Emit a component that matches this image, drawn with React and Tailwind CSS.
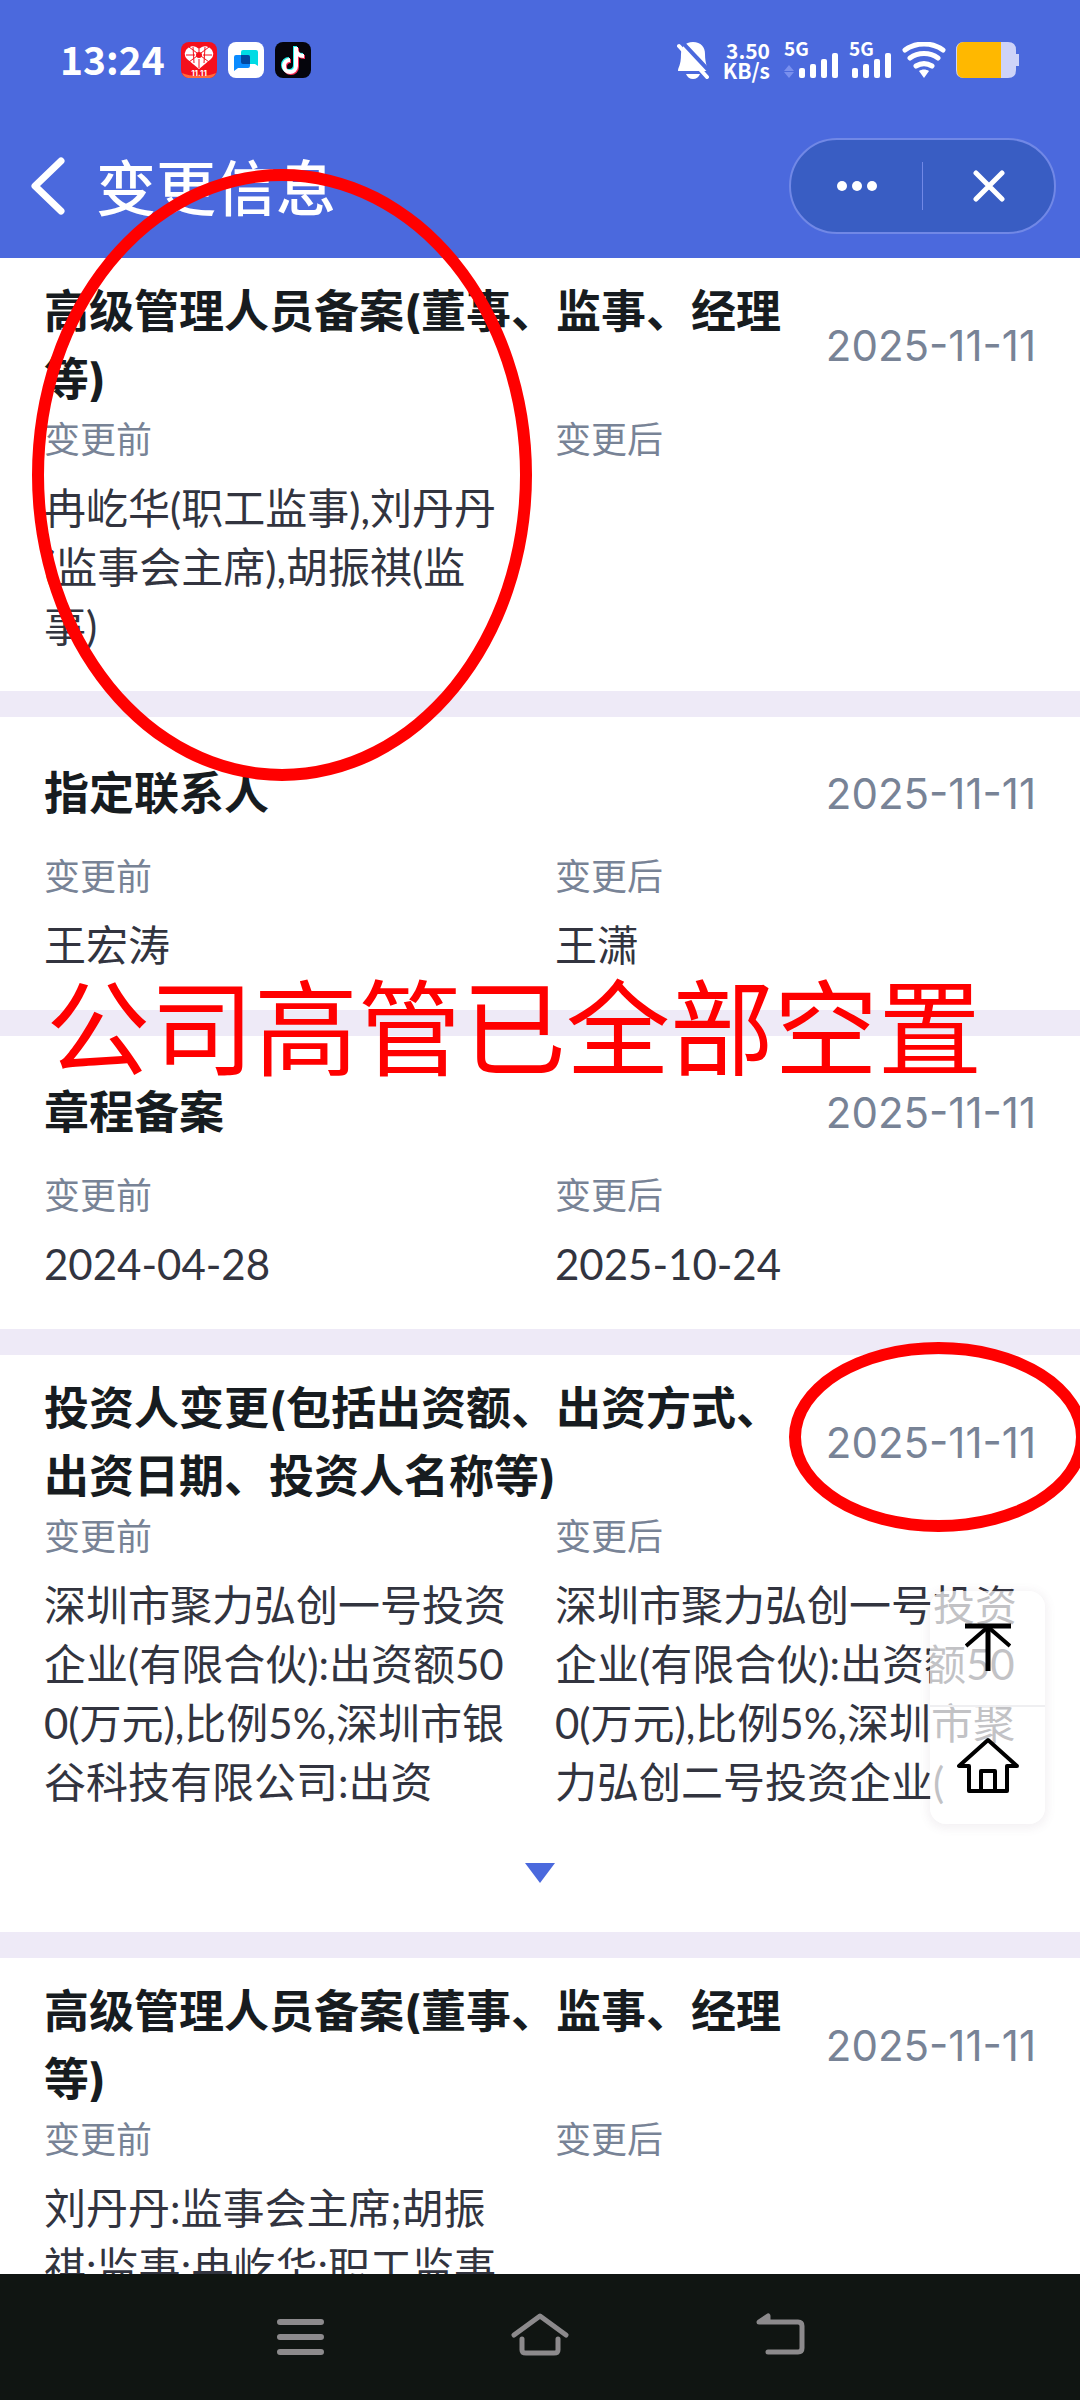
const records = [
  {
    title: "高级管理人员备案(董事、监事、经理等)",
    date: "2025-11-11",
    before: "冉屹华(职工监事),刘丹丹\n(监事会主席),胡振祺(监\n事)",
    after: "",
  },
  { title: "指定联系人", date: "2025-11-11", before: "王宏涛", after: "王潇" },
  { title: "章程备案", date: "2025-11-11", before: "2024-04-28", after: "2025-10-24" },
  {
    title: "投资人变更(包括出资额、出资方式、出资日期、投资人名称等)",
    date: "2025-11-11",
    before: "深圳市聚力弘创一号投资\n企业(有限合伙):出资额50\n0(万元),比例5%,深圳市银\n谷科技有限公司:出资",
    after: "深圳市聚力弘创一号投资\n企业(有限合伙):出资额50\n0(万元),比例5%,深圳市聚\n力弘创二号投资企业(",
    expandable: true,
  },
  {
    title: "高级管理人员备案(董事、监事、经理等)",
    date: "2025-11-11",
    before: "刘丹丹:监事会主席;胡振\n祺:监事;冉屹华:职工监事",
    after: "",
  },
];

function AppIcons() {
  return (
    <div className="flex items-center gap-[11px]">
      <svg className="size-9" viewBox="0 0 36 36">
        <rect width="36" height="36" rx="8" fill="#f5101c" />
        <path d="M1 31c8 4 26 4 34 0a8 8 0 0 1-8 5H9a8 8 0 0 1-8-5z" fill="#ff6a3c" />
        <path d="M18 27 6 17a7 7 0 0 1 1-11c4-3 8-2 11 1 3-3 7-4 11-1a7 7 0 0 1 1 11z" fill="#fff" />
        <path d="m8 5 20 15M28 5 8 20M18 7v4M18 17v9M5 13l9 0M31 13l-9 0M12 5l1 16M24 5l-1 16" stroke="#f5101c" strokeWidth="1" />
        <circle cx="18" cy="13" r="3" fill="#f5101c" />
        <text x="18" y="34" textAnchor="middle" fill="#fff" className="font-['Inter'] text-[8px] font-bold">11.11</text>
      </svg>
      <svg className="size-9" viewBox="0 0 36 36">
        <rect width="36" height="36" rx="8" fill="#fff" />
        <path d="M15 8h13a2 2 0 0 1 2 2v14l-3-2H15a2 2 0 0 1-2-2V10a2 2 0 0 1 2-2z" fill="#00dbe4" />
        <path d="M8 13h12a2 2 0 0 1 2 2v9a2 2 0 0 1-2 2H10l-4 3V15a2 2 0 0 1 2-2z" fill="#0a8bff" />
        <path d="M13 13h7a2 2 0 0 1 2 2v7h-7a2 2 0 0 1-2-2z" fill="#0047a0" />
      </svg>
      <svg className="size-9" viewBox="0 0 36 36">
        <rect width="36" height="36" rx="8" fill="#05050c" />
        <g fill="none" strokeWidth="4">
          <path d="M21 5v19a6 6 0 1 1-6-6M21 7c0 4 3 7 8 7" stroke="#25f4ee" transform="translate(-1 -1)" />
          <path d="M21 5v19a6 6 0 1 1-6-6M21 7c0 4 3 7 8 7" stroke="#fe2c55" transform="translate(1 1)" />
          <path d="M21 5v19a6 6 0 1 1-6-6M21 7c0 4 3 7 8 7" stroke="#fff" />
        </g>
      </svg>
    </div>
  );
}

function Signal({ arrows }) {
  return (
    <svg className={arrows ? "h-9 w-[55px] overflow-visible" : "h-9 w-[43px] overflow-visible"} viewBox={arrows ? "0 0 55 36" : "12 0 43 36"} fill="#fff">
      <text x={arrows ? 0 : 12} y="14" className="font-['Noto_Sans_CJK_SC'] text-[19px] font-bold">5G</text>
      {arrows && <path d="m5 23 5 6H0zM0 30h10l-5 6z" fill="#7a90ee" />}
      <rect x="15" y="26" width="6" height="10" rx="2" />
      <rect x="26" y="22" width="6" height="14" rx="2" />
      <rect x="37" y="17" width="6" height="19" rx="2" />
      <rect x="48" y="11" width="6" height="25" rx="2" />
    </svg>
  );
}

function StatusBar() {
  return (
    <div className="flex h-[120px] items-center justify-between px-[60px]">
      <div className="flex items-center gap-4">
        <span className="pb-1 font-['Noto_Sans_CJK_SC',sans-serif] text-[39px] leading-[36px] font-bold">13:24</span>
        <AppIcons />
      </div>
      <div className="flex items-center gap-2.5">
        <div className="mr-1 flex items-center gap-3.5">
          <svg className="h-[38px] w-8" viewBox="0 0 32 38" fill="#fff">
            <path d="M16 1c8 0 12 5 12 12 0 10 3 14 3 17H1c0-4 3-5 3-17C4 6 8 1 16 1z" />
            <path d="M9 33h14c-1 3-4 5-7 5s-6-2-7-5z" />
            <path d="M4 0 36 34" stroke="#4b69dd" strokeWidth="4" />
            <path d="m2 5 28 31" stroke="#fff" strokeWidth="4" strokeLinecap="round" />
          </svg>
          <div className="text-right font-['Noto_Sans_CJK_SC',sans-serif] text-[21px] leading-5 font-bold">
            <div>3.50</div>
            <div>KB/s</div>
          </div>
        </div>
        <Signal arrows />
        <Signal />
        <svg className="h-9 w-11" viewBox="0 0 44 36" fill="none" stroke="#fff" strokeWidth="5" strokeLinecap="round">
          <path d="M3 8c11-8 27-8 38 0M8 16c8-6 20-6 28 0M14 24c5-3 11-3 16 0" />
          <path d="M17 29c3-2 7-2 10 0l-5 7z" fill="#fff" stroke="none" />
        </svg>
        <svg className="h-9 w-16" viewBox="0 0 64 36">
          <path d="M8 0h44q8 0 8 8v4h3v12h-3v4q0 8-8 8H8q-8 0-8-8V8q0-8 8-8z" fill="#ced3f8" />
          <path d="M45 0H8Q1 0 1 8v20q0 8 7 8h37z" fill="#ffb800" />
        </svg>
      </div>
    </div>
  );
}

function Header() {
  return (
    <header className="h-[258px] shrink-0 bg-[#4b69dd] text-white">
      <StatusBar />
      <div className="flex h-[132px] items-center justify-between pr-6 pl-7">
        <div className="flex items-center gap-7">
          <button aria-label="返回">
            <svg className="h-[60px] w-10" viewBox="0 0 40 60" fill="none" stroke="#fff" strokeWidth="7" strokeLinecap="round" strokeLinejoin="round">
              <path d="M33 5 7 30l26 25" />
            </svg>
          </button>
          <h1 className="pt-1.5 text-[60px] leading-[72px] font-medium">变更信息</h1>
        </div>
        <div className="flex h-24 w-[267px] items-center rounded-full border-2 border-[#7188e6] bg-[#395dc3]">
          <button aria-label="更多" className="flex flex-1 justify-center">
            <svg className="h-3 w-10" viewBox="0 0 40 12" fill="#fff">
              <circle cx="5" cy="6" r="5" />
              <circle cx="20" cy="6" r="5" />
              <circle cx="35" cy="6" r="5" />
            </svg>
          </button>
          <div className="h-12 w-px bg-[#7188e6]" />
          <button aria-label="关闭" className="flex flex-1 justify-center">
            <svg className="size-8" viewBox="0 0 32 32" stroke="#fff" strokeWidth="5" strokeLinecap="round">
              <path d="m3 3 26 26M29 3 3 29" />
            </svg>
          </button>
        </div>
      </div>
    </header>
  );
}

function Field({ label, value }) {
  return (
    <div>
      <dt className="text-[36px] leading-[53px] text-[#788396]">{label}</dt>
      <dd className="mt-3 mb-[3px] font-['Lato','Noto_Sans_CJK_SC',sans-serif] text-[42px] leading-[59px] whitespace-pre text-[#32343f]">
        {value}
      </dd>
    </div>
  );
}

function RecordCard({ record }) {
  return (
    <section className="border-b-[26px] border-[#eeeaf7] bg-white px-11 pt-5 pb-8">
      <div className="flex min-h-[114px] items-center justify-between gap-7">
        <h2 className="text-[45px] leading-[68px] font-bold text-[#171c20]">{record.title}</h2>
        <time className="shrink-0 text-[42px] leading-[60px] text-[#788396]">{record.date}</time>
      </div>
      <dl className="grid grid-cols-2 gap-[30px]">
        <Field label="变更前" value={record.before} />
        <Field label="变更后" value={record.after} />
      </dl>
      {record.expandable && (
        <button aria-label="展开" className="mx-auto mt-12 mb-[17px] block">
          <svg className="h-5 w-[30px]" viewBox="0 0 30 20" fill="#4b69dd">
            <path d="M0 0h30L15 20z" />
          </svg>
        </button>
      )}
    </section>
  );
}

function FloatingTools() {
  return (
    <div className="absolute top-[1591px] right-[35px] w-[115px] rounded-2xl bg-white/70 shadow-[0_2px_8px_3px_rgba(120,90,120,0.08)]">
      <button aria-label="回到顶部" className="flex h-[116px] w-full justify-center border-b-2 border-[#efeff1] pt-8">
        <svg className="h-12 w-[46px]" viewBox="0 0 46 48" fill="none" stroke="#000" strokeWidth="4">
          <path d="M0 3h46M23 4v44" strokeWidth="5" />
          <path d="M1 23 23 4l22 19" />
        </svg>
      </button>
      <button aria-label="首页" className="flex h-[117px] w-full justify-center pt-[30px]">
        <svg className="h-[58px] w-[62px]" viewBox="0 0 62 58" fill="none" stroke="#000" strokeWidth="4" strokeLinejoin="round">
          <path d="M31 3 2 29h10v25h38V29h10zM24 54V34h14v20" />
        </svg>
      </button>
    </div>
  );
}

function NavBar() {
  return (
    <nav className="flex h-[126px] shrink-0 items-center justify-center gap-[180px] bg-[#101512]">
      <button aria-label="最近任务">
        <svg className="h-12 w-[60px]" viewBox="0 0 60 48" stroke="#8c8a8c" strokeWidth="6" strokeLinecap="round">
          <path d="M10 9h41M10 24h41M10 39h41" />
        </svg>
      </button>
      <button aria-label="主屏幕">
        <svg className="h-12 w-[60px]" viewBox="0 0 60 48" fill="none" stroke="#8c8a8c" strokeWidth="5" strokeLinecap="round" strokeLinejoin="round">
          <path d="M4 22 30 3l26 19M12 26v11q0 3 4 3h28q4 0 4-3V26" />
        </svg>
      </button>
      <button aria-label="返回上一级">
        <svg className="h-12 w-[60px]" viewBox="0 0 60 48" fill="none" stroke="#8c8a8c" strokeWidth="5" strokeLinecap="round" strokeLinejoin="round">
          <path d="M18 39h30q4 0 4-4V13q0-4-4-4H9l9-6v6" />
        </svg>
      </button>
    </nav>
  );
}

// hand drawn marks on top of the page
function Marks() {
  return (
    <div className="pointer-events-none absolute inset-0 overflow-hidden">
      <div className="absolute top-[169px] left-[32px] h-[612px] w-[500px] rounded-[50%] border-[12px] border-[#ff0000]" />
      <div className="absolute top-[1342px] left-[789px] h-[190px] w-[299px] rounded-[50%] border-[12px] border-[#ff0000]" />
      <p className="absolute top-[970px] left-[46px] text-[104px] leading-[120px] whitespace-nowrap text-[#ff0000]">
        公司高管已全部空置
      </p>
    </div>
  );
}

function App() {
  return (
    <div className="relative flex h-screen flex-col overflow-hidden bg-white font-['Inter','Noto_Sans_CJK_SC',sans-serif]">
      <Header />
      <main className="min-h-0 flex-1 overflow-hidden">
        {records.map((record, i) => (
          <RecordCard key={i} record={record} />
        ))}
      </main>
      <NavBar />
      <FloatingTools />
      <Marks />
    </div>
  );
}

export default App;
